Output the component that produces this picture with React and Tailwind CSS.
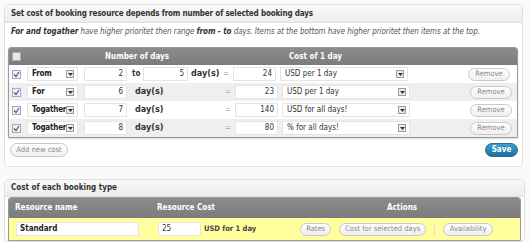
import React from "react";

const F = { fontFamily: '"DejaVu Sans Condensed","DejaVu Sans",sans-serif' };

function Arrow() {
  return (
    <span className="flex h-[8px] w-[8px] shrink-0 items-center justify-center border border-[#9a9a9a] bg-[#ececec]">
      <svg width="5" height="3" viewBox="0 0 5 3"><path d="M0 0H5L2.5 3Z" fill="#333" /></svg>
    </span>
  );
}

function Check() {
  return (
    <span className="flex h-[9px] w-[9px] items-center justify-center border border-[#a9a9b9] bg-[#eef0f8]">
      <svg width="7" height="7" viewBox="0 0 7 7"><path d="M1 3.5L3 5.5L6 1" stroke="#4b5a9a" strokeWidth="1.2" fill="none" /></svg>
    </span>
  );
}

function Input({ w, children, cls = "" }) {
  return (
    <div className={`flex h-[14px] items-center border border-[#e4e4e4] bg-white px-[3px] ${w} ${cls}`}>{children}</div>
  );
}

function Sel({ w, label, bold }) {
  return (
    <div className={`flex h-[14px] items-center justify-between border border-[#e4e4e4] bg-white pl-[4px] pr-[3px] ${w}`}>
      <span className={bold ? "font-bold tracking-[-0.2px] text-[#222]" : "text-[#333]"}>{label}</span>
      <Arrow />
    </div>
  );
}

function Btn({ children, cls = "" }) {
  return (
    <span className={`flex h-[13px] items-center justify-center rounded-full border border-[#c9c9c9] bg-gradient-to-b from-white to-[#efefef] text-[7.5px] text-[#8a8a8a] ${cls}`}>{children}</span>
  );
}

function Row({ bg, type, a, b, cost, unit }) {
  return (
    <div className={`flex h-[18px] items-center text-[8px] ${bg}`}>
      <div className="flex w-[14px] justify-center"><Check /></div>
      <div className="ml-[4px]"><Sel w="w-[51px]" label={type} bold /></div>
      <Input w="w-[43px]" cls="ml-[6px] justify-end text-[#333]">{a}</Input>
      {b ? (
        <>
          <span className="ml-[5px] w-[11px] font-bold text-[#333]">to</span>
          <Input w="w-[45px]" cls="justify-end text-[#333]">{b}</Input>
          <span className="ml-[3px] w-[30px] text-[9px] font-bold text-[#333]">day(s)</span>
        </>
      ) : (
        <>
          <span className="ml-[8px] w-[88px] text-[9px] font-bold text-[#333]">day(s)</span>
        </>
      )}
      <span className="ml-[2px] w-[10px] text-[#aaa]">=</span>
      <Input w="w-[43px]" cls="justify-end text-[#333]">{cost}</Input>
      <div className="ml-[4px]"><Sel w="w-[128px]" label={unit} /></div>
      <Btn cls="ml-[60px] w-[42px]">Remove</Btn>
    </div>
  );
}

export default function App() {
  return (
    <div style={F} className="h-[242px] w-[530px] overflow-hidden bg-[#fafafa] pl-[4px] pt-[4px] text-[#333]">
      <div className="w-[519px] rounded-[5px] border border-[#dfdfdf] bg-white">
        <div className="flex h-[18px] items-center rounded-t-[5px] border-b border-[#dfdfdf] bg-gradient-to-b from-[#f9f9f9] to-[#ececec] pl-[6px] text-[8px] font-bold tracking-[-0.15px] text-[#333]">
          Set cost of booking resource depends from number of selected booking days
        </div>
        <div className="px-[3px] pt-[3px] pb-[9px]">
          <div className="h-[12px] pl-[3px] text-[8px] leading-[12px] italic tracking-[-0.07px] text-[#555]">
            <b className="text-[#333]">For and togather</b> have higher prioritet then range <b className="text-[#333]">from - to</b> days. Items at the bottom have higher prioritet then items at the top.
          </div>
          <div className="mt-[9px] w-[510px] overflow-hidden rounded-t-[3px] border border-[#9a9a9a] shadow-[0_1px_2px_rgba(0,0,0,0.15)]">
            <div className="flex h-[17px] items-center bg-gradient-to-b from-[#8b8b8b] to-[#7c7c7c] text-[8px] font-bold text-white">
              <div className="flex w-[14px] justify-center"><span className="h-[9px] w-[9px] border border-[#aaa] bg-[#e8e8e8]" /></div>
              <span className="ml-[82px]">Number of days</span>
              <span className="ml-[120px]">Cost of 1 day</span>
            </div>
            <Row bg="bg-white" type="From" a="2" b="5" cost="24" unit="USD per 1 day" />
            <Row bg="bg-[#efefef]" type="For" a="6" cost="23" unit="USD per 1 day" />
            <Row bg="bg-white" type="Togather" a="7" cost="140" unit="USD for all days!" />
            <Row bg="bg-[#efefef]" type="Togather" a="8" cost="80" unit="% for all days!" />
          </div>
          <div className="mt-[5px] flex items-center justify-between pl-[2px] pr-[1px]">
            <Btn cls="w-[58px] h-[14px]">Add new cost</Btn>
            <span className="flex h-[14px] w-[33px] items-center justify-center rounded-full border border-[#2a6f97] bg-gradient-to-b from-[#3a9fd0] to-[#1f6f9f] text-[8px] font-bold text-white">Save</span>
          </div>
        </div>
      </div>

      <div className="mt-[12px] w-[521px] rounded-[5px] border border-[#dfdfdf] bg-white">
        <div className="flex h-[17px] items-center rounded-t-[5px] border-b border-[#dfdfdf] bg-gradient-to-b from-[#f9f9f9] to-[#ececec] pl-[6px] text-[8px] font-bold text-[#333]">
          Cost of each booking type
        </div>
        <div className="px-[3px]">
          <div className="overflow-hidden rounded-t-[3px] border border-[#9a9a9a]">
            <div className="flex h-[20px] items-center bg-gradient-to-b from-[#8b8b8b] to-[#7c7c7c] text-[8px] font-bold text-white">
              <span className="ml-[6px] w-[142px]">Resource name</span>
              <span className="w-[230px]">Resource Cost</span>
              <span>Actions</span>
            </div>
            <div className="flex h-[22px] items-center bg-[#ffff9e] text-[8px]">
              <Input w="w-[123px]" cls="ml-[7px] font-bold text-[#222]">Standard</Input>
              <Input w="w-[43px]" cls="ml-[19px] text-[#333]">25</Input>
              <span className="ml-[3px] text-[7.5px] font-bold text-[#444]">USD for 1 day</span>
              <Btn cls="ml-[44px] w-[31px]">Rates</Btn>
              <Btn cls="ml-[8px] w-[87px]">Cost for selected days</Btn>
              <span className="ml-[8px] h-[12px] w-px bg-[#ddd]" />
              <Btn cls="ml-[8px] w-[50px]">Availability</Btn>
            </div>
          </div>
        </div>
      </div>
    </div>
  );
}
